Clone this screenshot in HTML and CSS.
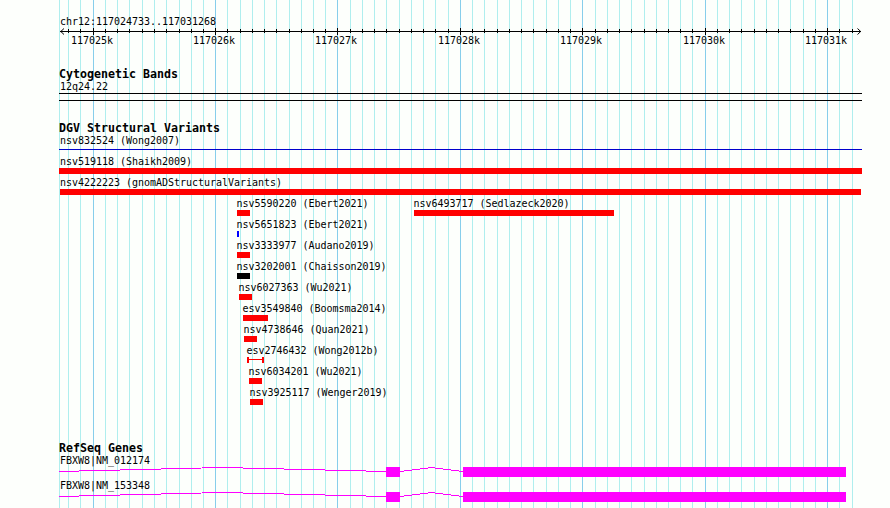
FILE: index.html
```html
<!DOCTYPE html>
<html lang="en">
<head>
  <meta charset="UTF-8" />
  <title>chr12:117024733..117031268</title>
  <link rel="stylesheet" href="styles.css">
</head>
<body>
  <main class="panel">
    <!-- Vertical grid behind all tracks -->
    <svg class="grid" width="890" height="508" aria-hidden="true">
      <path id="minor" class="grid-minor" />
      <path id="major" class="grid-major" />
    </svg>

    <!-- Ruler -->
    <header class="ruler">
      <div class="label region">chr12:117024733..117031268</div>
      <svg class="axis" width="890" height="20">
        <path class="axis-line" d="M60 3.5H861" />
        <path id="ticks" class="axis-line" />
        <path class="axis-arrow" d="M64 0.5L60.8 3.5L64 6.5M857.5 0.5L860.7 3.5L857.5 6.5" />
        <g class="axis-text">
          <text x="71" y="16">117025k</text>
          <text x="193" y="16">117026k</text>
          <text x="315" y="16">117027k</text>
          <text x="438" y="16">117028k</text>
          <text x="560" y="16">117029k</text>
          <text x="683" y="16">117030k</text>
          <text x="805" y="16">117031k</text>
        </g>
      </svg>
    </header>

    <section class="track bands">
      <h2>Cytogenetic Bands</h2>
      <div class="label region">12q24.22</div>
      <div class="band"></div>
    </section>

    <section class="track variants">
      <h2>DGV Structural Variants</h2>
      <div class="row">
        <div class="feature" style="--x:59px;--w:803px"><div class="label">nsv832524 (Wong2007)</div><div class="bar inversion"></div></div>
      </div>
      <div class="row">
        <div class="feature" style="--x:59px;--w:803px"><div class="label">nsv519118 (Shaikh2009)</div><div class="bar loss"></div></div>
      </div>
      <div class="row">
        <div class="feature" style="--x:60px;--w:801px"><div class="label">nsv4222223 (gnomADStructuralVariants)</div><div class="bar loss"></div></div>
      </div>
      <div class="row">
        <div class="feature" style="--x:237px;--w:13px"><div class="label">nsv5590220 (Ebert2021)</div><div class="bar loss"></div></div>
        <div class="feature" style="--x:414px;--w:200px"><div class="label">nsv6493717 (Sedlazeck2020)</div><div class="bar loss"></div></div>
      </div>
      <div class="row">
        <div class="feature" style="--x:237px;--w:2px"><div class="label">nsv5651823 (Ebert2021)</div><div class="bar gain"></div></div>
      </div>
      <div class="row">
        <div class="feature" style="--x:237px;--w:13px"><div class="label">nsv3333977 (Audano2019)</div><div class="bar loss"></div></div>
      </div>
      <div class="row">
        <div class="feature" style="--x:237px;--w:13px"><div class="label">nsv3202001 (Chaisson2019)</div><div class="bar complex"></div></div>
      </div>
      <div class="row">
        <div class="feature" style="--x:239px;--w:13px"><div class="label">nsv6027363 (Wu2021)</div><div class="bar loss"></div></div>
      </div>
      <div class="row">
        <div class="feature" style="--x:243px;--w:25px"><div class="label">esv3549840 (Boomsma2014)</div><div class="bar loss"></div></div>
      </div>
      <div class="row">
        <div class="feature" style="--x:244px;--w:13px"><div class="label">nsv4738646 (Quan2021)</div><div class="bar loss"></div></div>
      </div>
      <div class="row">
        <div class="feature" style="--x:247px;--w:17px"><div class="label">esv2746432 (Wong2012b)</div><div class="bar span"></div></div>
      </div>
      <div class="row">
        <div class="feature" style="--x:249px;--w:13px"><div class="label">nsv6034201 (Wu2021)</div><div class="bar loss"></div></div>
      </div>
      <div class="row">
        <div class="feature" style="--x:250px;--w:13px"><div class="label">nsv3925117 (Wenger2019)</div><div class="bar loss"></div></div>
      </div>
    </section>

    <section class="track genes">
      <h2>RefSeq Genes</h2>
      <div class="gene">
        <div class="label region">FBXW8|NM_012174</div>
        <svg class="gene-model" width="890" height="12">
          <path class="intron" d="M59 4.5L222.5 0.5L386 4.5M400 4.5L431.5 0.5L463 4.5" />
          <path class="exon" d="M386 0h14v10h-14zM463 0h383v10h-383z" />
        </svg>
      </div>
      <div class="gene">
        <div class="label region">FBXW8|NM_153348</div>
        <svg class="gene-model" width="890" height="12">
          <path class="intron" d="M59 4.5L222.5 0.5L386 4.5M400 4.5L431.5 0.5L463 4.5" />
          <path class="exon" d="M386 0h14v10h-14zM463 0h383v10h-383z" />
        </svg>
      </div>
    </section>
  </main>

  <script>
    // one line per 100 bp, one major line per 1 kb
    const major = [93, 215, 337, 460, 582, 705, 827];
    const minor = [
      68, 80, 105, 117, 129, 142, 154, 166, 179, 191, 203,
      227, 240, 252, 264, 276, 289, 301, 313, 325,
      350, 362, 374, 386, 399, 411, 423, 435, 448,
      472, 484, 497, 509, 521, 533, 546, 558, 570,
      595, 607, 619, 631, 644, 656, 668, 680, 692,
      717, 729, 741, 754, 766, 778, 790, 803, 815, 839, 852
    ];
    const lines = (xs, y, h) => xs.map(x => `M${x + 0.5} ${y}v${h}`).join('');

    document.getElementById('minor').setAttribute('d', lines([59, ...minor], 0, 508));
    document.getElementById('major').setAttribute('d', lines(major, 0, 508));
    document.getElementById('ticks').setAttribute('d', lines(minor, 1, 4) + lines(major, 0, 7));
  </script>
</body>
</html>
```

FILE: styles.css
```css
* {
  box-sizing: border-box;
  margin: 0;
  padding: 0;
}
body {
  background: #fdfffc;
  color: #000;
  font-family: 'DejaVu Sans Mono', monospace;
  font-size: 10px;
  line-height: 13px;
}
svg {
  display: block;
}
.panel {
  position: relative;
  width: 890px;
  height: 508px;
  padding-top: 15px;
  overflow: hidden;
}
.grid {
  position: absolute;
  top: 0;
  left: 0;
  z-index: -1;
}
.grid path {
  stroke-width: 1;
  shape-rendering: crispEdges;
}
.grid-minor {
  stroke: #afeeee;
}
.grid-major {
  stroke: #87ceeb;
}
.label {
  height: 13px;
  white-space: pre;
  letter-spacing: -0.02px;
}
.region {
  margin-left: 60px;
}
h2 {
  height: 13px;
  margin-left: 59px;
  font-size: 11.63px;
  font-weight: 700;
  line-height: 15px;
  white-space: pre;
}

/* Ruler */
.axis-line {
  stroke: #000;
  shape-rendering: crispEdges;
}
.axis-arrow {
  fill: none;
  stroke: #000;
}
.axis-text {
  font-size: 10px;
  letter-spacing: -0.02px;
}

/* Tracks */
.bands {
  margin-top: 19px;
}
.band {
  width: 803px;
  height: 8px;
  margin-left: 59px;
  border-top: 1px solid #000;
  border-bottom: 1px solid #000;
}
.variants {
  margin-top: 20px;
}
.row {
  display: grid;
  height: 21px;
}
.feature {
  grid-area: 1 / 1;
}
.feature .label {
  margin-left: max(60px, calc(var(--x) - 0.5px));
}
.bar {
  width: var(--w);
  height: 6px;
  margin-left: var(--x);
}
.loss {
  background: #f00;
}
.gain {
  background: #00f;
}
.complex {
  background: #000;
}
.inversion {
  height: 1px;
  margin-top: 2px;
  background: #0000cd;
}
.span {
  border: solid #f00;
  border-width: 0 2px;
  background: linear-gradient(#f00, #f00) 0 2px / 100% 1px no-repeat;
}

/* Genes */
.genes {
  margin-top: 34px;
}
.gene {
  height: 25px;
}
.intron {
  fill: none;
  stroke: #f0f;
  shape-rendering: crispEdges;
}
.exon {
  fill: #f0f;
}
```
